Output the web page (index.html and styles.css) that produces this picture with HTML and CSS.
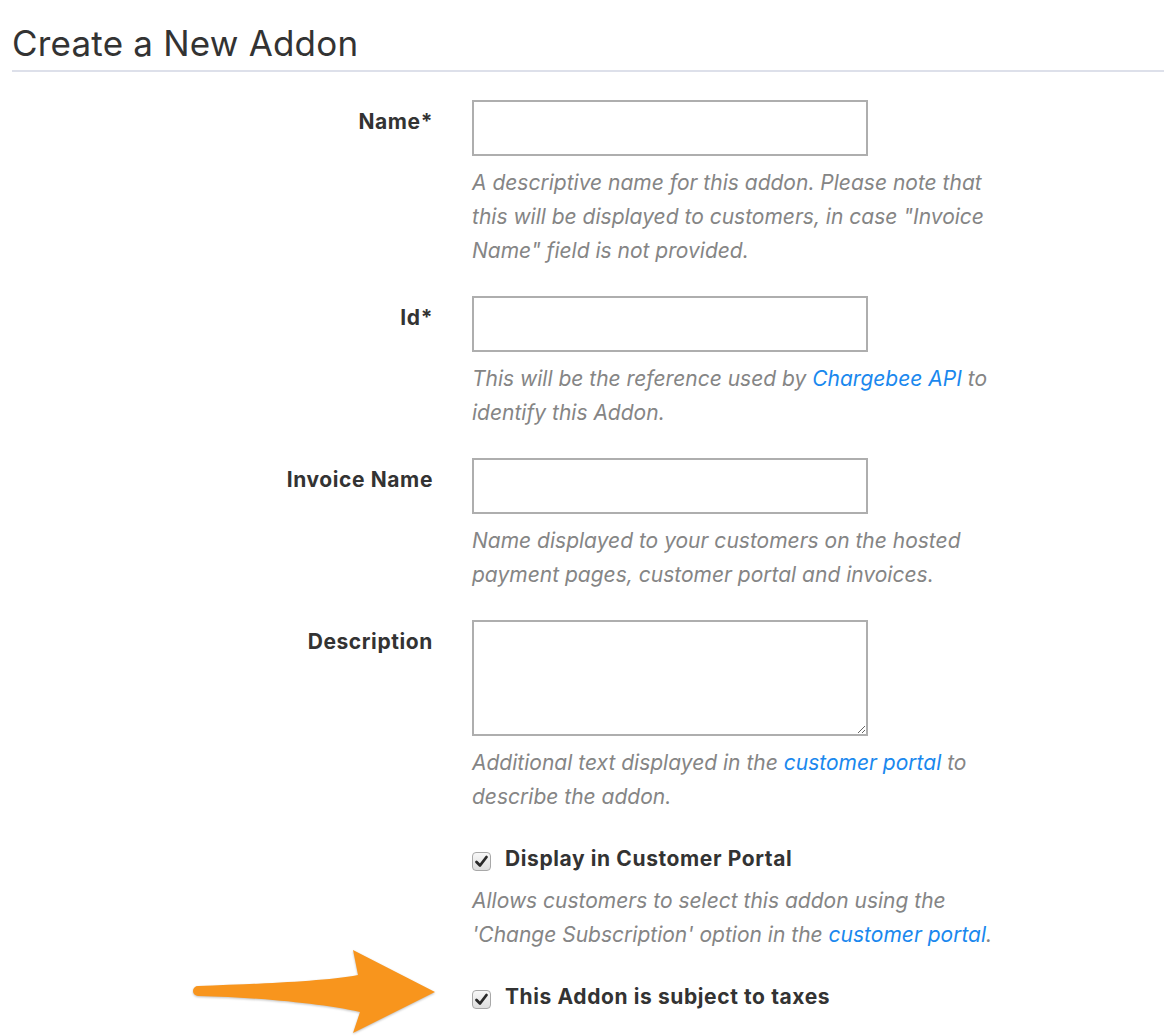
FILE: index.html
```html
<!DOCTYPE html>
<html>
<head>
<meta charset="utf-8">
<link rel="stylesheet" href="styles.css">
</head>
<body>
<div class="page">
  <h1 class="title">Create a New Addon</h1>
  <form class="form">
    <div class="row">
      <label class="label">Name*</label>
      <div class="field">
        <input class="input" type="text">
        <p class="help">A descriptive name for this addon. Please note that this will be displayed to customers, in case "Invoice Name" field is not provided.</p>
      </div>
    </div>
    <div class="row">
      <label class="label">Id*</label>
      <div class="field">
        <input class="input" type="text">
        <p class="help">This will be the reference used by <a class="link" href="#">Chargebee API</a> to identify this Addon.</p>
      </div>
    </div>
    <div class="row">
      <label class="label">Invoice Name</label>
      <div class="field">
        <input class="input" type="text">
        <p class="help">Name displayed to your customers on the hosted payment pages, customer portal and invoices.</p>
      </div>
    </div>
    <div class="row">
      <label class="label">Description</label>
      <div class="field">
        <textarea class="textarea"></textarea>
        <p class="help help-ta">Additional text displayed in the <a class="link" href="#">customer portal</a> to describe the addon.</p>
      </div>
    </div>
    <div class="row">
      <div class="label"></div>
      <div class="field">
        <div class="check-row">
          <span class="cb"><svg viewBox="0 0 19 19" width="19" height="19"><path d="M4.5 10 L8 13.5 L14.5 5" fill="none" stroke="#2a2a2a" stroke-width="2.8" stroke-linecap="round" stroke-linejoin="round"/></svg></span>
          <span class="check-label">Display in Customer Portal</span>
        </div>
        <p class="help help-cb">Allows customers to select this addon using the 'Change Subscription' option in the <a class="link" href="#">customer portal</a>.</p>
      </div>
    </div>
    <div class="row">
      <div class="label"></div>
      <div class="field">
        <div class="check-row">
          <span class="cb"><svg viewBox="0 0 19 19" width="19" height="19"><path d="M4.5 10 L8 13.5 L14.5 5" fill="none" stroke="#2a2a2a" stroke-width="2.8" stroke-linecap="round" stroke-linejoin="round"/></svg></span>
          <span class="check-label">This Addon is subject to taxes</span>
        </div>
      </div>
    </div>
  </form>
  <svg class="arrow" width="250" height="91" viewBox="190 945 250 91">
    <path d="M198,986 C250,984 320,982 358,975 L353,950 L435,992 L353,1033 L360,1012 C320,1003 250,997 198,996 A5,5 0 0 1 198,986 Z" fill="#f8951d"/>
  </svg>
</div>
</body>
</html>
```

FILE: styles.css
```css
html, body {
  margin: 0;
  padding: 0;
  background: #ffffff;
}
body {
  font-family: Inter, Roboto, "Liberation Sans", sans-serif;
  color: #333333;
}
.page {
  position: relative;
  width: 1164px;
  height: 1036px;
  overflow: hidden;
}
.title {
  margin: 22px 0 0 12px;
  padding-bottom: 6px;
  font-size: 35px;
  font-weight: 400;
  letter-spacing: 0.2px;
  line-height: 42px;
  color: #333333;
  border-bottom: 2px solid #dde0ea;
}
.form {
  margin-top: 28px;
}
.row {
  display: flex;
  margin-bottom: 28px;
}
.label {
  width: 433px;
  margin-right: 39px;
  padding-top: 5px;
  text-align: right;
  font-size: 21px;
  font-weight: 700;
  letter-spacing: 0.6px;
  line-height: 34px;
  color: #333333;
  flex: none;
}
.field {
  width: 540px;
}
.input {
  display: block;
  box-sizing: border-box;
  width: 396px;
  height: 56px;
  margin: 0;
  border: 2px solid #aeaeae;
  border-radius: 0;
  background: #fff;
  outline: none;
}
.textarea {
  display: block;
  box-sizing: border-box;
  width: 396px;
  height: 116px;
  margin: 0;
  border: 2px solid #aeaeae;
  border-radius: 0;
  background: #fff;
  outline: none;
}
.help {
  margin: 10px 0 0 0;
  font-size: 21px;
  font-style: italic;
  line-height: 34px;
  color: #858585;
}
.help-cb {
  margin-top: 8px;
}
.link {
  color: #1a88ee;
  text-decoration: none;
}
.check-row {
  display: flex;
  align-items: center;
  height: 34px;
}
.cb {
  box-sizing: border-box;
  width: 19px;
  height: 19px;
  border: 1px solid #a8a8a8;
  border-radius: 4px;
  background: linear-gradient(#f8f8f8, #dedede);
  display: flex;
  align-items: center;
  justify-content: center;
  flex: none;
  margin-top: 4px;
}
.cb svg {
  display: block;
  margin: -1px;
}
.check-label {
  margin-left: 14px;
  font-size: 21px;
  font-weight: 700;
  letter-spacing: 0.6px;
  line-height: 34px;
  color: #333333;
}
.arrow {
  position: absolute;
  left: 190px;
  top: 945px;
  filter: drop-shadow(0 1px 1px rgba(0,0,0,0.25));
}
```
